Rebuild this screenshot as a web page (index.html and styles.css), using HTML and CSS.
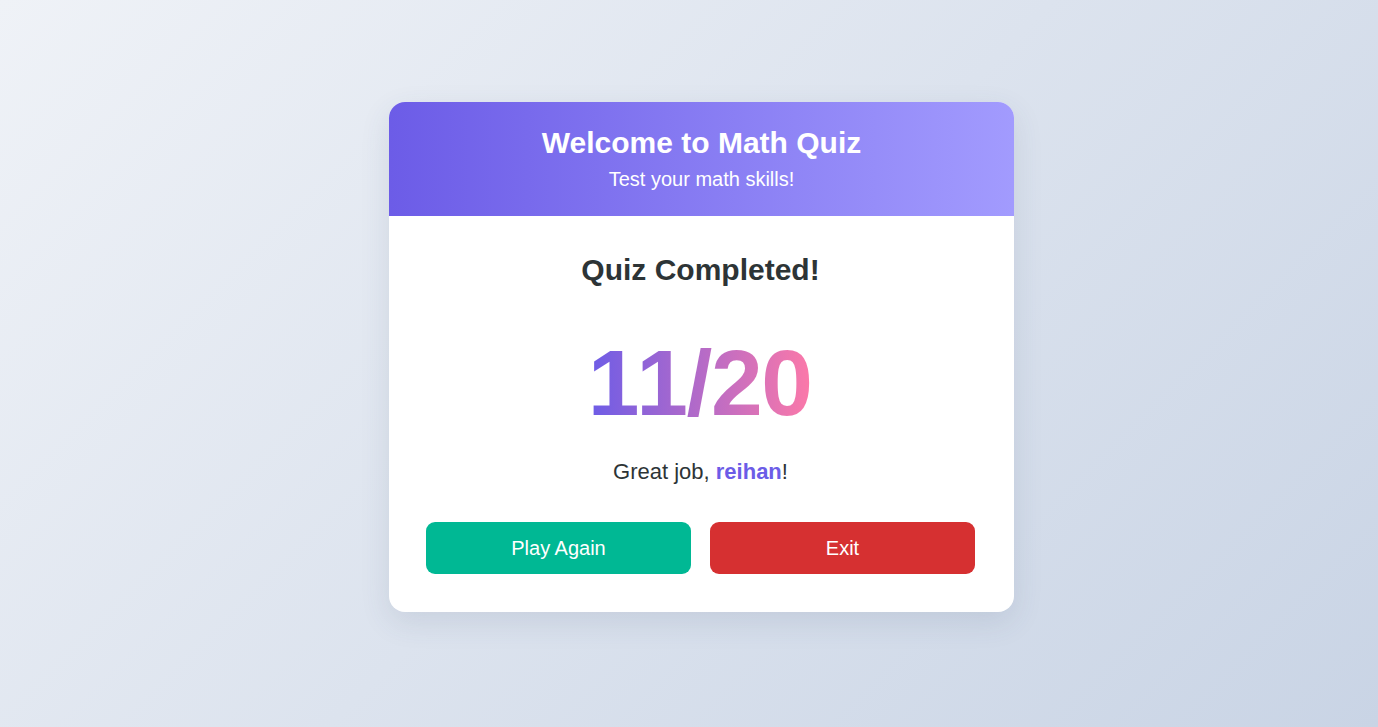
FILE: index.html
```html
<!DOCTYPE html>
<html lang="en">
<head>
<meta charset="utf-8">
<title>Math Quiz</title>
<link rel="stylesheet" href="styles.css">
</head>
<body>
<main class="card">
  <header class="card-header">
    <h1 class="title">Welcome to Math Quiz</h1>
    <p class="subtitle">Test your math skills!</p>
  </header>
  <section class="card-body">
    <h2 class="result-title">Quiz Completed!</h2>
    <div class="score"><span class="kern">1</span>1/20</div>
    <p class="message">Great job, <span class="name">reihan</span>!</p>
    <div class="actions">
      <button class="btn btn-play">Play Again</button>
      <button class="btn btn-exit">Exit</button>
    </div>
  </section>
</main>
</body>
</html>
```

FILE: styles.css
```css
* { box-sizing: border-box; }
html, body { height: 100%; }
body {
  margin: 0;
  font-family: "Liberation Sans", Arial, sans-serif;
  background: linear-gradient(135deg, #eff2f7 0%, #c9d4e5 100%);
  display: flex;
  align-items: center;
  justify-content: center;
  padding: 0 0 13px 25px;
}
.card {
  width: 625px;
  background: #fff;
  border-radius: 16px;
  overflow: hidden;
  box-shadow: 0 10px 30px rgba(60, 70, 110, 0.12);
}
.card-header {
  background: linear-gradient(90deg, #6c5ce7 0%, #a29bfe 100%);
  color: #fff;
  text-align: center;
  padding: 24px 20px 26px;
}
.title {
  margin: 0;
  font-size: 30px;
  line-height: 33px;
  font-weight: 700;
}
.subtitle {
  margin: 9px 0 0;
  font-size: 20px;
  line-height: 22px;
}
.card-body {
  padding: 37px 39px 38px 37px;
  text-align: center;
}
.result-title {
  margin: 0;
  font-size: 30px;
  line-height: 34px;
  font-weight: 700;
  color: #2d3436;
}
.score {
  display: block;
  width: fit-content;
  margin: 42px auto 0;
  padding-right: 2px;
  font-size: 93px;
  line-height: 108px;
  font-weight: 700;
  letter-spacing: -1.5px;
  background: linear-gradient(90deg, #6c5ce7 0%, #fd79a8 100%);
  -webkit-background-clip: text;
  background-clip: text;
  color: transparent;
}
.kern { letter-spacing: -3px; }
.message {
  margin: 22px 0 0;
  font-size: 22px;
  line-height: 25px;
  color: #2d3436;
}
.name {
  font-weight: 700;
  color: #6c5ce7;
}
.actions {
  margin-top: 38px;
  display: grid;
  grid-template-columns: 1fr 1fr;
  gap: 19px;
}
.btn {
  height: 52px;
  border: none;
  border-radius: 9px;
  color: #fff;
  font-family: inherit;
  font-size: 20px;
  cursor: pointer;
}
.btn-play { background: #00b894; }
.btn-exit { background: #d63031; }
```
